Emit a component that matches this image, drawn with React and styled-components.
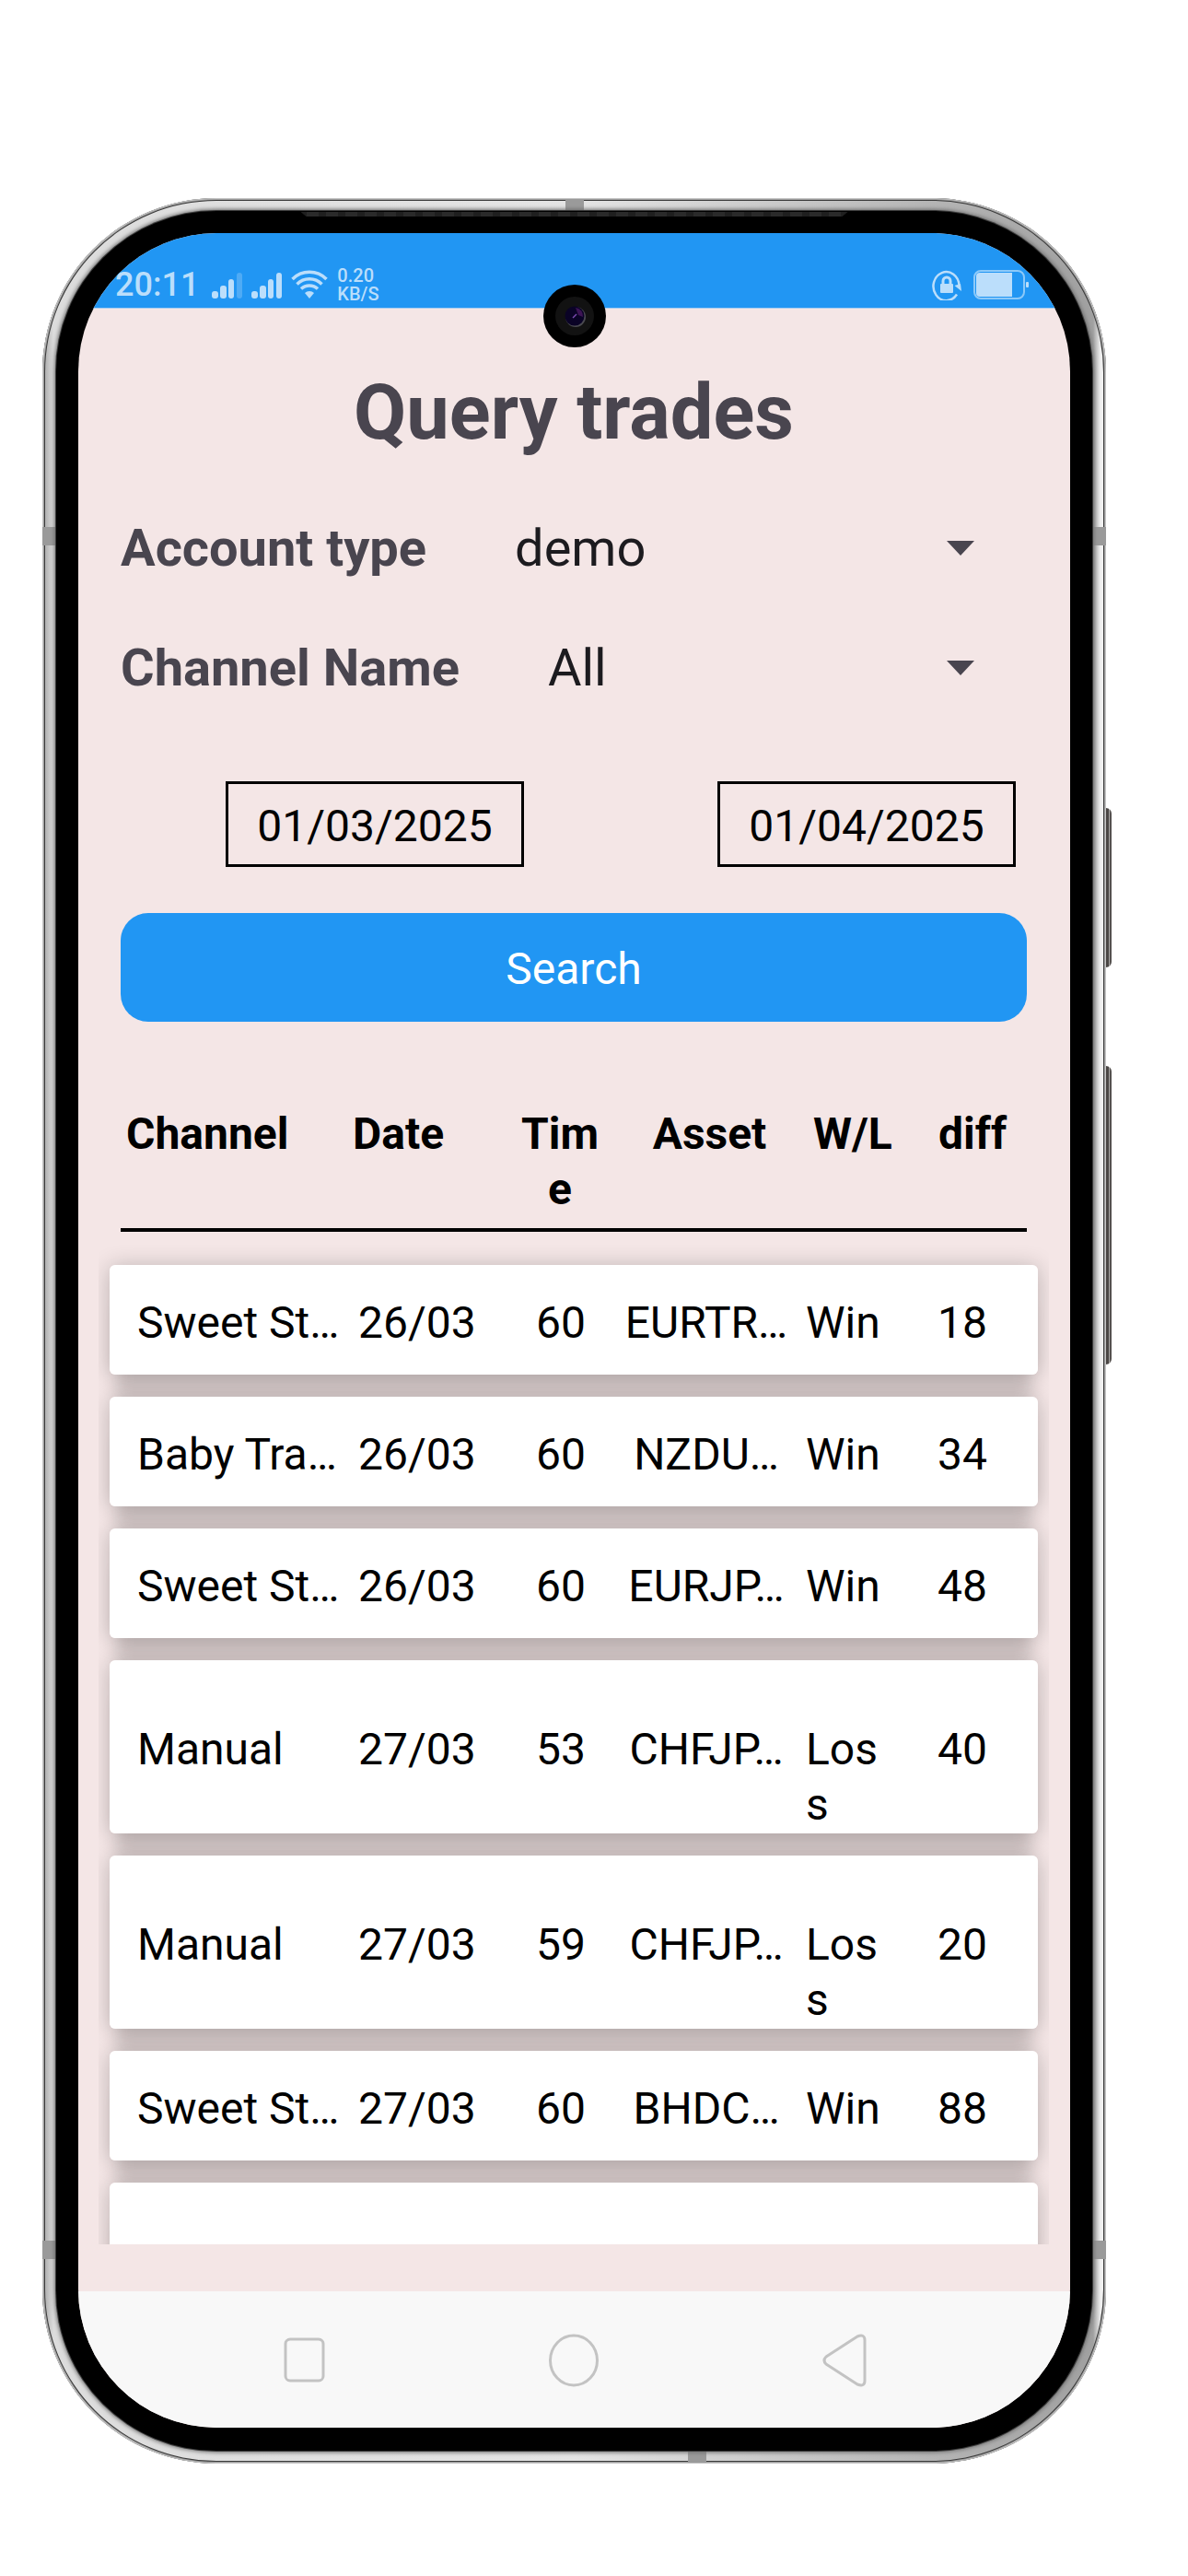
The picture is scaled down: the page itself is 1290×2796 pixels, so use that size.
import React from "react";
import styled, { createGlobalStyle, css } from "styled-components";

const color = {
  blue: "#2196f3",
  page: "#f4e6e6",
  heading: "#49454f",
  ink: "#1c1b1f",
  status: "#bbdefb",
};

const GlobalStyle = createGlobalStyle`
  *, *::before, *::after { box-sizing: border-box; }
  body { margin: 0; background: #fff; font-family: Roboto, "Noto Sans", sans-serif; }
  button, input, select { font: inherit; color: inherit; margin: 0; }
`;

/* ---------- phone shell ---------- */

const Stage = styled.div`
  display: flex;
  height: 100vh;
  padding: 215px 89px 122px 46px;
`;

const Phone = styled.div`
  position: relative;
  display: flex;
  flex: 1;
  min-width: 0;
  padding: 14px 15px;
  border-radius: 189px;
  background: linear-gradient(90deg, #a2a2a2 0, #dcdcdc 12px, #e4e4e4 50%, #a0a0a0 calc(100% - 14px), #f0f0f0 calc(100% - 6px));
  box-shadow: inset 0 0 0 1px #c4c4c4, inset 0 0 0 2px #a0a0a0, inset 0 0 0 3px #3a3a3a;
`;

const Bezel = styled.div`
  position: relative;
  display: flex;
  flex: 1;
  min-width: 0;
  padding: 24px 24px 25px;
  border-radius: 174px;
  background: #000;
  box-shadow: 0 0 0 1px #3c3c3c, 0 0 4px 2px #6e6e6e;
`;

const Speaker = styled.div`
  position: absolute;
  top: 1px;
  left: 50%;
  width: 594px;
  height: 5px;
  margin-left: -297px;
  background: repeating-linear-gradient(90deg, #1f1f1f 0 6px, #2a2a2a 6px 19px, #1f1f1f 19px 21px);
  clip-path: polygon(0 0, 100% 0, 99% 100%, 1% 100%);
`;

const Band = styled.span`
  position: absolute;
  background: #9a9a9a;
  ${({ $side }) =>
    $side === "left" || $side === "right"
      ? css`
          ${$side}: 0;
          width: 14px;
          height: 20px;
        `
      : css`
          ${$side}: 1px;
          width: 20px;
          height: 12px;
        `}
  ${({ $fromTop }) => $fromTop && css`top: ${$fromTop}px;`}
  ${({ $fromBottom }) => $fromBottom && css`bottom: ${$fromBottom}px;`}
  ${({ $fromLeft }) => $fromLeft && css`left: ${$fromLeft};`}
`;

const SideKey = styled.span`
  position: absolute;
  right: -6px;
  top: ${({ $top }) => $top}px;
  width: 6px;
  height: ${({ $length }) => $length}px;
  border-radius: 0 6px 6px 0;
  background: linear-gradient(90deg, #4a4644 0 3px, #a8a6a4 3px 4px, #55514f 4px);
`;

const Screen = styled.div`
  display: flex;
  flex-direction: column;
  flex: 1;
  min-width: 0;
  overflow: hidden;
  border-radius: 150px;
  background: ${color.page};
`;

const Camera = styled.svg`
  position: absolute;
  top: 80px;
  left: 50%;
  width: 68px;
  height: 68px;
  margin-left: -34px;
`;

/* ---------- status bar ---------- */

const StatusBar = styled.header`
  display: flex;
  flex: none;
  align-items: center;
  justify-content: space-between;
  height: 82px;
  padding: 30px 44px 0 40px;
  border-bottom: 1px solid #a9cdf0;
  background: ${color.blue};
  color: ${color.status};
`;

const StatusGroup = styled.div`
  display: flex;
  align-items: center;
  gap: ${({ $gap }) => $gap}px;
`;

const Clock = styled.time`
  margin-right: 4px;
  font-size: 36px;
  font-weight: 500;
  line-height: 40px;
`;

const Speed = styled.span`
  font-size: 20px;
  font-weight: 500;
  line-height: 20px;
`;

const SignalIcon = ({ weak }) => (
  <svg width="33" height="30" viewBox="0 0 33 30" fill="currentColor">
    <rect x="0" y="22" width="7" height="8" rx="3" />
    <rect x="9" y="16" width="7" height="14" rx="3" />
    <rect x="18" y="9" width="6" height="21" rx="3" />
    <rect x="27" y="2" width="6" height="28" rx="3" opacity={weak ? 0.3 : 1} />
  </svg>
);

const WifiIcon = () => (
  <svg width="40" height="32" viewBox="0 0 40 32" fill="none" stroke="currentColor" strokeWidth="3.500">
    <path d="M1.500 10 A26 26 0 0 1 38.500 10" />
    <path d="M6.500 15.500 A19 19 0 0 1 33.500 15.500" />
    <path d="M11 20.500 A13 13 0 0 1 29 20.500" />
    <path d="M20 31 L15 25 A7 7 0 0 1 25 25 Z" fill="currentColor" stroke="none" />
  </svg>
);

const RotationLockIcon = () => (
  <svg width="32" height="34" viewBox="0 0 32 34" fill="none" stroke="currentColor" strokeWidth="2.500">
    <path d="M27 27.500 A14 15.500 0 1 1 29.500 18" />
    <path d="M24.500 18 L31 16 L32 24 Z" fill="currentColor" stroke="none" />
    <rect x="9" y="16" width="14" height="10" rx="1" fill="currentColor" stroke="none" />
    <path d="M12 17 V13 A4 4 0 0 1 20 13 V17" strokeWidth="3" />
  </svg>
);

const BatteryIcon = () => (
  <svg width="61" height="32" viewBox="0 0 61 32">
    <rect x="1" y="1" width="54" height="30" rx="7" fill="none" stroke="currentColor" strokeWidth="2" opacity="0.700" />
    <path d="M7 3 H42 V29 H7 A4 4 0 0 1 3 25 V7 A4 4 0 0 1 7 3 Z" fill="currentColor" />
    <rect x="57" y="13" width="3" height="6" rx="1" fill="currentColor" />
  </svg>
);

/* ---------- query form ---------- */

const Main = styled.main`
  display: flex;
  flex-direction: column;
  flex: 1;
  min-height: 0;
  padding: 63px 47px 51px 46px;
`;

const Title = styled.h1`
  margin: 0 0 32px;
  color: ${color.heading};
  font-size: 83px;
  font-weight: 700;
  line-height: 100px;
  text-align: center;
`;

const Form = styled.form`
  display: flex;
  flex-direction: column;
`;

const Field = styled.div`
  display: flex;
  align-items: center;
  gap: 96px;
  height: 130px;
  font-size: 56px;
  line-height: 68px;
`;

const FieldLabel = styled.label`
  color: ${color.heading};
  font-weight: 700;
`;

const SelectBox = styled.div`
  display: grid;
  flex: 1;
  align-items: center;
  color: ${color.ink};

  > * { grid-area: 1 / 1; }
`;

const Select = styled.select`
  width: 100%;
  padding: 0;
  border: 0;
  background: none;
  appearance: none;
`;

const Arrow = styled.svg`
  justify-self: end;
  margin-right: 57px;
  width: 30px;
  height: 16px;
  fill: ${color.heading};
  pointer-events: none;
`;

const Dates = styled.div`
  display: flex;
  justify-content: space-between;
  margin-top: 58px;
  padding: 0 12px 0 114px;
`;

const DateInput = styled.input`
  width: 324px;
  height: 93px;
  padding: 4px 0 0;
  border: 3px solid #000;
  border-radius: 0;
  background: none;
  color: #000;
  font-size: 48px;
  text-align: center;
`;

const SearchButton = styled.button`
  height: 118px;
  margin-top: 50px;
  padding: 2px 0 0;
  border: 0;
  border-radius: 30px;
  background: ${color.blue};
  color: #fff;
  font-size: 48px;
`;

/* ---------- trades table ---------- */

const Table = styled.table`
  display: flex;
  flex-direction: column;
  flex: 1;
  min-height: 0;
  margin-top: 92px;
  color: #000;
  font-size: 48px;
  line-height: 60px;
`;

const Head = styled.thead`
  display: block;
  flex: none;
`;

const HeadRow = styled.tr`
  display: grid;
  grid-template-columns: 246fr 175fr 100fr 225fr 136fr 96fr;
  padding: 0 0 12px 6px;
  border-bottom: 4px solid #000;
`;

const Body = styled.tbody`
  display: flex;
  flex-direction: column;
  flex: 1;
  gap: 24px;
  min-height: 0;
  margin: 12px -24px 0;
  padding: 24px 12px;
  overflow-y: auto;
  scrollbar-width: none;
  isolation: isolate;
`;

const Card = styled.tr`
  position: relative;
  display: grid;
  flex: none;
  grid-template-columns: 240fr 170fr 100fr 216fr 143fr 109fr;
  min-height: 119px;
  padding: ${({ $tall }) => ($tall ? "67px 0 1px 30px" : "33px 0 26px 30px")};
  border-radius: 6px;
  background: #fff;

  &::before {
    content: "";
    position: absolute;
    inset: 0;
    z-index: -1;
    border-radius: 6px;
    box-shadow: 0 2px 24px rgba(0, 0, 0, 0.24), 0 36px 16px -8px rgba(0, 0, 0, 0.12);
  }
`;

const cell = css`
  min-width: 0;
  padding: 0;
  text-align: ${({ $center }) => ($center ? "center" : "left")};
  word-break: break-all;
`;

const HeadCell = styled.th`
  ${cell}
  font-weight: 700;
`;

const Cell = styled.td`
  ${cell}
  white-space: ${({ $oneLine }) => ($oneLine ? "nowrap" : "normal")};
`;

const ResultCell = styled(Cell)`
  padding-right: 48px;
`;

/* ---------- system navigation ---------- */

const NavBar = styled.nav`
  display: grid;
  flex: none;
  grid-template-columns: repeat(3, 1fr);
  place-items: center;
  height: 148px;
  padding: 0 98px;
  background: #f8f8f8;
`;

const NavButton = styled.button`
  display: flex;
  padding: 0;
  border: 0;
  background: none;
  color: #c3c3c3;
`;

const NavIcon = ({ children }) => (
  <svg width="56" height="60" viewBox="0 0 56 60" fill="none" stroke="currentColor" strokeWidth="3" strokeLinejoin="round">
    {children}
  </svg>
);

const trades = [
  ["Sweet St…", "26/03", 60, "EURTR…", "Win", 18],
  ["Baby Tra…", "26/03", 60, "NZDU…", "Win", 34],
  ["Sweet St…", "26/03", 60, "EURJP…", "Win", 48],
  ["Manual", "27/03", 53, "CHFJP…", "Loss", 40],
  ["Manual", "27/03", 59, "CHFJP…", "Loss", 20],
  ["Sweet St…", "27/03", 60, "BHDC…", "Win", 88],
  ["", "", "", "", "", ""],
];

function SelectField({ id, label, options }) {
  return (
    <Field>
      <FieldLabel htmlFor={id}>{label}</FieldLabel>
      <SelectBox>
        <Select id={id}>
          {options.map((option) => (
            <option key={option}>{option}</option>
          ))}
        </Select>
        <Arrow viewBox="0 0 30 16">
          <path d="M0 0 H30 L15 16 Z" />
        </Arrow>
      </SelectBox>
    </Field>
  );
}

export default function App() {
  return (
    <>
      <GlobalStyle />
      <Stage>
        <Phone>
          <Band $side="top" $fromLeft="calc(50% - 10px)" />
          <Band $side="bottom" $fromLeft="calc(61% - 4px)" />
          <Band $side="left" $fromTop={357} />
          <Band $side="right" $fromTop={357} />
          <Band $side="left" $fromBottom={222} />
          <Band $side="right" $fromBottom={222} />
          <SideKey $top={662} $length={173} />
          <SideKey $top={942} $length={324} />
          <Bezel>
            <Speaker />
            <Screen>
              <StatusBar>
                <StatusGroup $gap={10}>
                  <Clock>20:11</Clock>
                  <SignalIcon weak />
                  <SignalIcon />
                  <WifiIcon />
                  <Speed>
                    0.20
                    <br />
                    KB/S
                  </Speed>
                </StatusGroup>
                <StatusGroup $gap={13}>
                  <RotationLockIcon />
                  <BatteryIcon />
                </StatusGroup>
              </StatusBar>
              <Main>
                <Title>Query trades</Title>
                <Form onSubmit={(event) => event.preventDefault()}>
                  <SelectField id="account" label="Account type" options={["demo"]} />
                  <SelectField id="channel" label="Channel Name" options={["All"]} />
                  <Dates>
                    <DateInput aria-label="From date" defaultValue="01/03/2025" />
                    <DateInput aria-label="To date" defaultValue="01/04/2025" />
                  </Dates>
                  <SearchButton type="submit">Search</SearchButton>
                </Form>
                <Table>
                  <Head>
                    <HeadRow>
                      <HeadCell>Channel</HeadCell>
                      <HeadCell>Date</HeadCell>
                      <HeadCell $center>Time</HeadCell>
                      <HeadCell $center>Asset</HeadCell>
                      <HeadCell>W/L</HeadCell>
                      <HeadCell>diff</HeadCell>
                    </HeadRow>
                  </Head>
                  <Body>
                    {trades.map(([channel, date, time, asset, result, diff], index) => (
                      <Card key={index} $tall={result === "Loss"}>
                        <Cell $oneLine>{channel}</Cell>
                        <Cell>{date}</Cell>
                        <Cell $center>{time}</Cell>
                        <Cell $center $oneLine>{asset}</Cell>
                        <ResultCell>{result}</ResultCell>
                        <Cell>{diff}</Cell>
                      </Card>
                    ))}
                  </Body>
                </Table>
              </Main>
              <NavBar>
                <NavButton aria-label="Recent apps">
                  <NavIcon>
                    <rect x="8" y="8" width="41" height="45" rx="5" />
                  </NavIcon>
                </NavButton>
                <NavButton aria-label="Home">
                  <NavIcon>
                    <ellipse cx="28" cy="31" rx="25.500" ry="27" />
                  </NavIcon>
                </NavButton>
                <NavButton aria-label="Back">
                  <NavIcon>
                    <path d="M8 27 L42 5 Q50 2 50 9 V53 Q50 60 42 57 L8 35 Q4 31 8 27 Z" />
                  </NavIcon>
                </NavButton>
              </NavBar>
            </Screen>
            <Camera viewBox="0 0 68 68">
              <circle cx="34" cy="34" r="34" fill="#000" />
              <circle cx="34" cy="34" r="21" fill="#121212" />
              <circle cx="35" cy="35" r="11" fill="#4a4a50" />
              <circle cx="34" cy="34" r="10.500" fill="#0a0326" />
              <path d="M35 25 A9 9 0 0 1 43 35 L38 33 Z" fill="#3c1454" />
              <path d="M32 36 L36 32" stroke="#7a4ab0" strokeWidth="1.500" />
            </Camera>
          </Bezel>
        </Phone>
      </Stage>
    </>
  );
}
